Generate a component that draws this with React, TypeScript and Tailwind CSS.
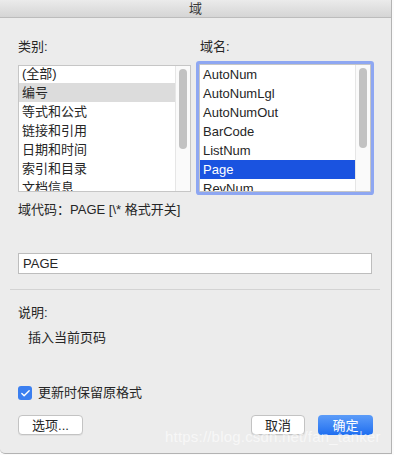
import { Check } from "lucide-react";

const categories = ["(全部)", "编号", "等式和公式", "链接和引用", "日期和时间", "索引和目录", "文档信息"];
const fieldNames = ["AutoNum", "AutoNumLgl", "AutoNumOut", "BarCode", "ListNum", "Page", "RevNum"];

const font = "font-['Liberation_Sans','Noto_Sans_CJK_SC',sans-serif]";

const ScrollTrack = () => (
  <div className="w-[15px] shrink-0 border-l border-[#e6e6e6] bg-[#fafafa] pt-[3px] pl-[3px]">
    <div className="w-[8px] h-[80px] rounded-full bg-[#c2c2c2]" />
  </div>
);

const App = () => {
  return (
    <div className={`w-[394px] h-[455px] bg-[#fbfbfb] ${font} text-[13px] text-[#262626]`}>
      <div className="relative w-[392px] h-[454px] bg-[#ececec] border-r border-b border-[#b3b3b3] rounded-bl-[5px] overflow-hidden">
        {/* title bar */}
        <div className="h-[18px] flex items-center justify-center border-b border-[#bcbcbc] bg-gradient-to-b from-[#ebebeb] to-[#d5d5d5] text-[13px] leading-none text-[#3a3a3a]">
          域
        </div>

        <div className="px-[18px]">
          <div className="grid grid-cols-[173px_172px] gap-x-[8px] mt-[21px]">
            <div className="leading-[16px]">类别:</div>
            <div className="leading-[16px] pl-[1px]">域名:</div>

            {/* categories */}
            <div className="mt-[10px] h-[127px] flex border border-[#c6c6c6] bg-white overflow-hidden">
              <div className="flex-1 -mt-[2px]">
                {categories.map((c, i) => (
                  <div
                    key={c}
                    className={`h-[19px] leading-[19px] pl-[3px] ${i === 1 ? "bg-[#dcdcdc]" : ""}`}
                  >
                    {c}
                  </div>
                ))}
              </div>
              <ScrollTrack />
            </div>

            {/* field names */}
            <div className="mt-[9px] h-[128px] flex border border-[#c6c6c6] bg-white rounded-[1px] ring-[3px] ring-[#8ea7f2] overflow-hidden">
              <div className="flex-1">
                {fieldNames.map((n) => (
                  <div
                    key={n}
                    className={`h-[19px] leading-[19px] pl-[3px] ${n === "Page" ? "bg-[#1a53e0] text-white" : ""}`}
                  >
                    {n}
                  </div>
                ))}
              </div>
              <ScrollTrack />
            </div>
          </div>

          <div className="mt-[10px] leading-[16px]">域代码：PAGE [\* 格式开关]</div>

          <div className="mt-[35px] w-[354px] h-[21px] border border-[#bdbdbd] bg-white pl-[4px] leading-[19px]">
            PAGE
          </div>
        </div>

        <div className="mx-[10px] mt-[15px] h-px bg-[#d3d3d3] w-[370px]" />

        <div className="px-[18px]">
          <div className="mt-[15px] leading-[16px]">说明:</div>
          <div className="mt-[9px] pl-[10px] leading-[16px]">插入当前页码</div>

          <div className="mt-[39px] flex items-center gap-[6px]">
            <div className="w-[14px] h-[14px] rounded-[3px] bg-[#3b7ff0] flex items-center justify-center">
              <Check size={11} strokeWidth={3} className="text-white" />
            </div>
            <span className="leading-[16px]">更新时保留原格式</span>
          </div>

          <div className="mt-[14px] flex items-center">
            <button className="w-[65px] h-[20px] rounded-[4px] bg-white border border-[#c3c3c3] shadow-[0_1px_0_rgba(0,0,0,0.05)] leading-none">
              选项...
            </button>
            <button className="ml-auto w-[54px] h-[20px] rounded-[4px] bg-white border border-[#c3c3c3] shadow-[0_1px_0_rgba(0,0,0,0.05)] leading-none">
              取消
            </button>
            <button className="ml-[13px] w-[55px] h-[20px] rounded-[4px] bg-gradient-to-b from-[#5c9cf8] to-[#1e6ef0] text-white leading-none">
              确定
            </button>
          </div>
        </div>

        {/* watermark */}
        <div className="absolute left-[165px] top-[428px] text-[15px] leading-[18px] text-white/60 tracking-[0.2px]">
          https://blog.csdn.net/fan_tanker
        </div>
      </div>
    </div>
  );
};

export default App;
